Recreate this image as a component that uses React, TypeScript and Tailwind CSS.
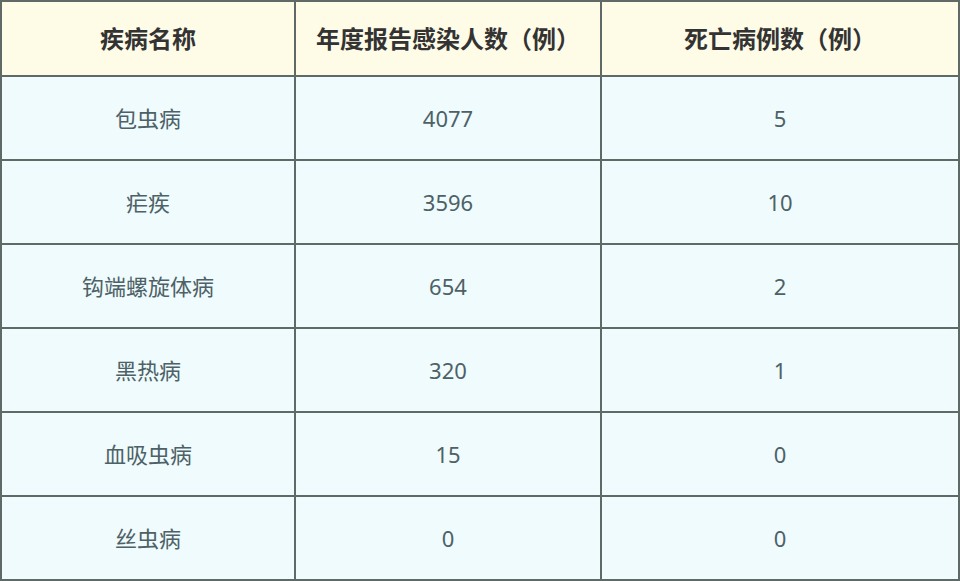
const header = ["疾病名称", "年度报告感染人数（例）", "死亡病例数（例）"];

const rows: [string, string, string][] = [
  ["包虫病", "4077", "5"],
  ["疟疾", "3596", "10"],
  ["钩端螺旋体病", "654", "2"],
  ["黑热病", "320", "1"],
  ["血吸虫病", "15", "0"],
  ["丝虫病", "0", "0"],
];

export default function App() {
  return (
    <div
      className="w-[960px] h-[581px] bg-[#effbfd]"
      style={{ fontFamily: '"Noto Sans", "Noto Sans CJK SC", sans-serif' }}
    >
      <div className="grid grid-cols-[294px_306px_358px] grid-rows-[75px_repeat(6,84px)] border-l-2 border-t-2 border-[#5f6a66]">
        {header.map((h) => (
          <div
            key={h}
            className="flex items-center justify-center border-r-2 border-b-2 border-[#5f6a66] bg-[#fefbe7] text-[24px] font-bold text-[#333333]"
          >
            {h}
          </div>
        ))}
        {rows.map((r) =>
          r.map((cell, i) => (
            <div
              key={r[0] + i}
              className="flex items-center justify-center border-r-2 border-b-2 border-[#5f6a66] bg-[#effbfd] text-[22px] text-[#4d6166]"
            >
              {cell}
            </div>
          ))
        )}
      </div>
    </div>
  );
}
